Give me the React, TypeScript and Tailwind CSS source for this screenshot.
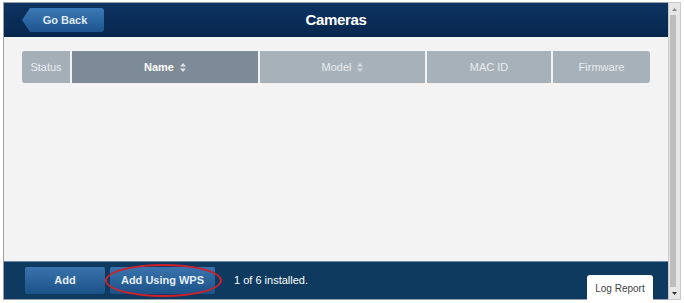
import React from "react";

function SortIcon({ className }: { className?: string }) {
  return (
    <svg width="6" height="9" viewBox="0 0 6 9" className={className}>
      <path d="M3 0L6 3.5H0Z M3 9L0 5.5H6Z" fill="currentColor" />
    </svg>
  );
}

export default function App() {
  const cols = [
    { label: "Status", w: "w-[48px]", bg: "bg-[#a5afb8]", sort: false, strong: false },
    { label: "Name", w: "w-[186px]", bg: "bg-[#7d8a97]", sort: true, strong: true },
    { label: "Model", w: "w-[165px]", bg: "bg-[#a7b1ba]", sort: true, strong: false },
    { label: "MAC ID", w: "w-[124px]", bg: "bg-[#a7b1ba]", sort: false, strong: false },
    { label: "Firmware", w: "flex-1", bg: "bg-[#a7b1ba]", sort: false, strong: false },
  ];

  return (
    <div className="w-[684px] h-[303px] bg-white flex pt-[2px] pl-[3px] pr-[3px] pb-[3px] font-['Liberation_Sans',Arial,sans-serif]">
      <div className="flex-1 flex flex-col border border-[#9aa0a6] border-r-0">
        {/* header */}
        <div className="h-[34px] bg-gradient-to-b from-[#0e3462] to-[#07264d] flex items-center relative px-[18px]">
          <button className="relative h-[24px] w-[82px] flex items-center justify-center text-[11px] font-bold text-[#dfe9f4] bg-gradient-to-b from-[#3d7ab8] to-[#1d548d] rounded-r-[3px] [clip-path:polygon(8px_0,100%_0,100%_100%,8px_100%,0_50%)]">
            <span className="pl-[4px]">Go Back</span>
          </button>
          <div className="absolute inset-0 flex items-center justify-center pointer-events-none">
            <span className="text-white font-bold text-[15px] tracking-tight">Cameras</span>
          </div>
        </div>
        {/* body */}
        <div className="flex-1 bg-[#f3f3f3] pt-[14px] px-[18px]">
          <div className="flex h-[32px] w-[628px] gap-[2px] rounded-[3px] overflow-hidden">
            {cols.map((c) => (
              <div
                key={c.label}
                className={`${c.w} ${c.bg} flex items-center justify-center gap-[6px] text-[11px] ${c.strong ? "font-bold text-white" : "text-[#e9edf0]"}`}
              >
                <span>{c.label}</span>
                {c.sort && <SortIcon className={c.strong ? "text-[#dde3e8]" : "text-[#d5dbe0]"} />}
              </div>
            ))}
          </div>
        </div>
        {/* footer */}
        <div className="h-[38px] bg-[#0e3a60] flex items-end pl-[21px] pr-[15px] border-t border-[#6d8aa6]">
          <div className="flex items-center gap-[5px] h-full">
            <button className="h-[27px] w-[80px] rounded-[2px] bg-gradient-to-b from-[#3a73ad] to-[#1b5288] text-[#e4edf6] text-[11px] font-bold">
              Add
            </button>
            <div className="relative">
              <button className="h-[27px] w-[105px] rounded-[2px] bg-gradient-to-b from-[#3a73ad] to-[#1b5288] text-[#e4edf6] text-[11px] font-bold">
                Add Using WPS
              </button>
              <div className="absolute left-[-5px] top-[-3px] w-[117px] h-[33px] rounded-[50%] border-2 border-[#d0202a] pointer-events-none" />
            </div>
            <span className="ml-[14px] text-white text-[11px]">1 of 6 installed.</span>
          </div>
          <div className="ml-auto">
            <button className="h-[27px] w-[66px] bg-white rounded-t-[3px] text-[#444] text-[10px] mb-[-4px]">
              Log Report
            </button>
          </div>
        </div>
      </div>
      {/* scrollbar */}
      <div className="w-[14px] bg-[#e6e6e6] border border-[#c8c8c8] flex flex-col items-stretch">
        <div className="h-[12px] flex items-center justify-center">
          <svg width="5" height="3" viewBox="0 0 5 3"><path d="M2.5 0L5 3H0Z" fill="#8a8a8a" /></svg>
        </div>
        <div className="flex-1 mx-[1px] mr-[4px] bg-[#bdbdbd]" />
        <div className="h-[12px] flex items-center justify-center">
          <svg width="5" height="3" viewBox="0 0 5 3"><path d="M0 0H5L2.5 3Z" fill="#333" /></svg>
        </div>
      </div>
    </div>
  );
}
